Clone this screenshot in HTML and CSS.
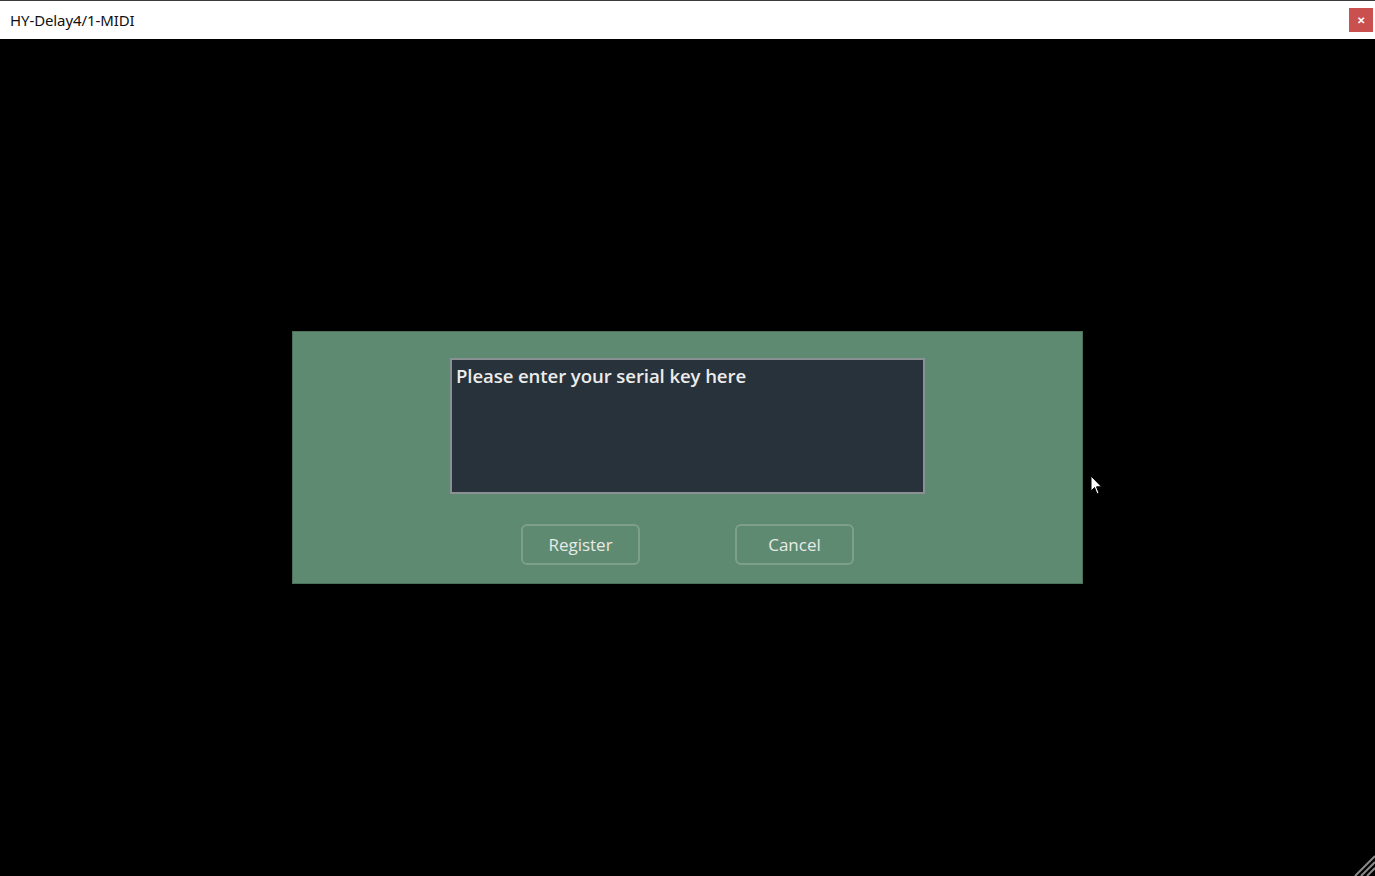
FILE: index.html
```html
<!DOCTYPE html>
<html lang="en">

<head>
    <meta charset="UTF-8">
    <title>HY-Delay4/1-MIDI</title>
    <link rel="stylesheet" href="styles.css">
</head>

<body>
    <div class="window">
        <div class="titlebar">
            <span class="title">HY-Delay4/1-MIDI</span>
            <button class="close" aria-label="Close">&#x2715;</button>
        </div>

        <div class="content">
            <div class="register-panel">
                <div class="serial-box">Please enter your serial key here</div>
                <div class="actions">
                    <button class="btn">Register</button>
                    <button class="btn">Cancel</button>
                </div>
            </div>

            <svg class="cursor" width="14" height="22" viewBox="0 0 14 22">
                <path d="M1 1 L1 16 L4.5 12.5 L7 19 L9 18 L6.5 11.8 L11.5 11.8 Z" fill="#fff" stroke="#000" stroke-width="1" />
            </svg>

            <svg class="grip" width="24" height="24" viewBox="0 0 24 24">
                <g stroke="#8a8a8a" stroke-width="2">
                    <line x1="24" y1="4" x2="4" y2="24" />
                    <line x1="24" y1="10" x2="10" y2="24" />
                    <line x1="24" y1="16" x2="16" y2="24" />
                </g>
            </svg>
        </div>
    </div>
</body>

</html>
```

FILE: styles.css
```css
html,
body {
    margin: 0;
    height: 100%;
    background: #000;
    font-family: 'Open Sans', 'Noto Sans', sans-serif;
    overflow: hidden;
}

.window {
    display: flex;
    flex-direction: column;
    height: 100%;
}

.titlebar {
    flex: 0 0 38px;
    display: flex;
    align-items: center;
    justify-content: space-between;
    background: #fff;
    border-top: 1px solid #3a3a3a;
    padding: 0 2px 0 10px;
}

.title {
    font-family: 'Noto Sans', 'Open Sans', sans-serif;
    font-size: 15px;
    color: #111;
    letter-spacing: -0.1px;
}

.close {
    width: 24px;
    height: 24px;
    border: none;
    background: #c9504f;
    color: #fff;
    font-size: 10px;
    font-weight: bold;
    padding: 0;
    cursor: pointer;
}

.content {
    position: relative;
    flex: 1;
    display: flex;
    align-items: center;
    justify-content: center;
}

.register-panel {
    width: 791px;
    height: 253px;
    box-sizing: border-box;
    background: #5d8a70;
    border: 1px solid #4b715b;
    padding: 26px 0 0;
    display: flex;
    flex-direction: column;
    align-items: center;
}

.serial-box {
    width: 475px;
    height: 136px;
    box-sizing: border-box;
    background: #27323a;
    border: 2px solid #8b9095;
    color: #ececec;
    font-size: 18.6px;
    font-weight: 600;
    padding: 3px 4px;
    line-height: 26px;
    letter-spacing: -0.1px;
}

.actions {
    display: flex;
    gap: 95px;
    margin-top: 30px;
}

.btn {
    width: 119px;
    height: 41px;
    background: transparent;
    border: 2px solid #7ea08b;
    border-radius: 6px;
    color: #e8ebe8;
    font-family: 'Open Sans', 'Noto Sans', sans-serif;
    font-size: 17px;
    font-weight: 500;
    cursor: pointer;
}

.cursor {
    position: absolute;
    left: 1090px;
    top: 436px;
}

.grip {
    position: absolute;
    right: 0;
    bottom: 0;
}
```
